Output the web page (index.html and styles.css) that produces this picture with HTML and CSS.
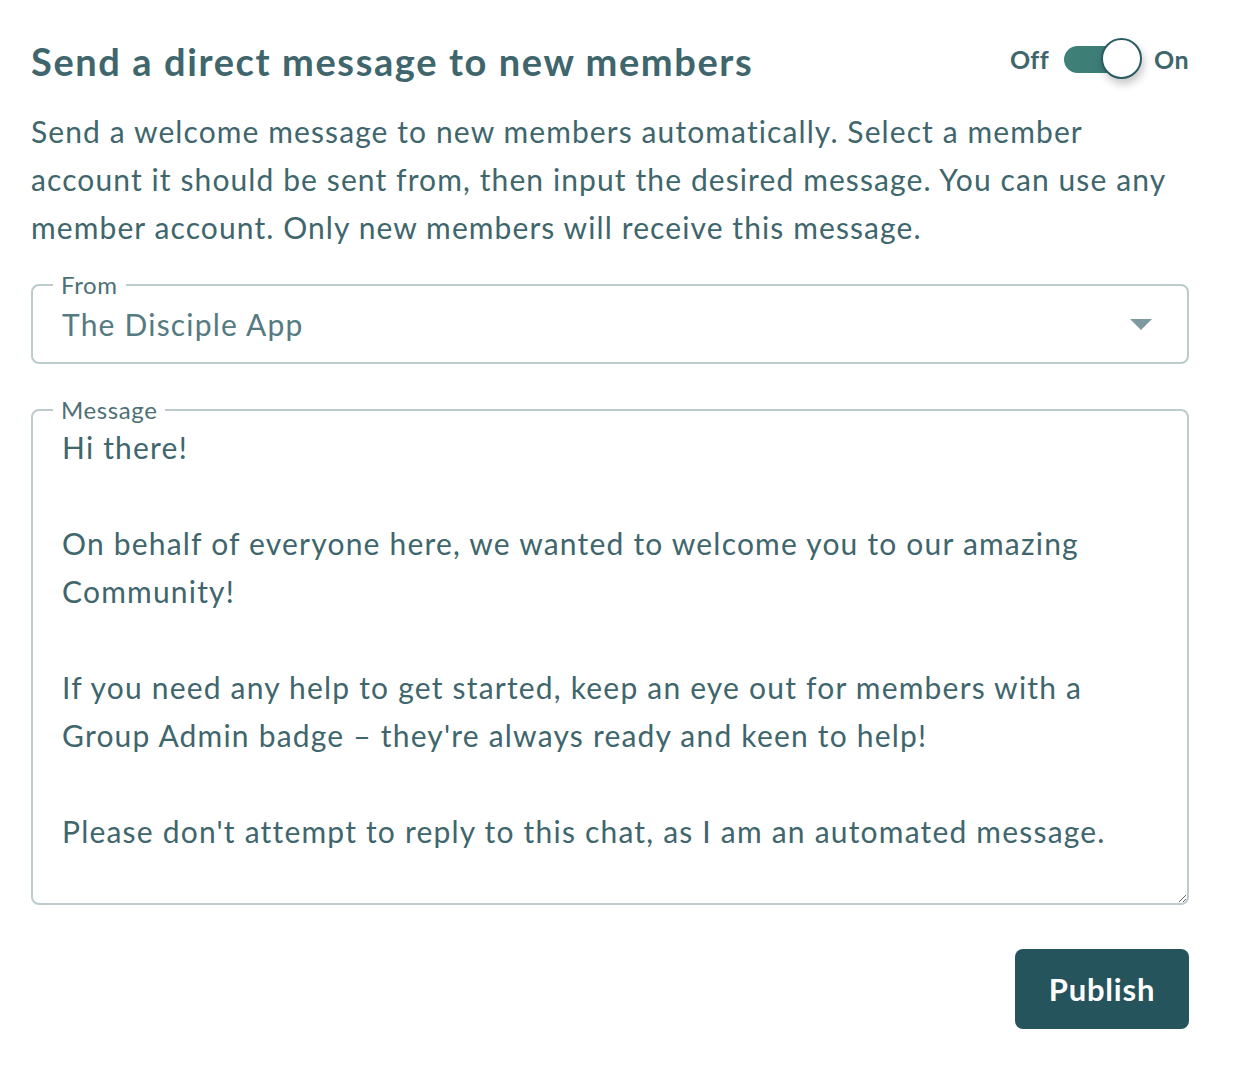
FILE: index.html
```html
<!DOCTYPE html>
<html lang="en">
<head>
<meta charset="utf-8">
<title>Send a direct message to new members</title>
<link rel="stylesheet" href="styles.css">
</head>
<body>
<main class="panel">
  <header class="panel-header">
    <h1 class="title">Send a direct message to new members</h1>
    <div class="toggle">
      <span class="toggle-label">Off</span>
      <span class="switch"><span class="switch-track"></span><span class="switch-knob"></span></span>
      <span class="toggle-label">On</span>
    </div>
  </header>
  <p class="description">Send a welcome message to new members automatically. Select a member account it should be sent from, then input the desired message. You can use any member account. Only new members will receive this message.</p>
  <fieldset class="field field-select">
    <legend class="field-legend">From</legend>
    <div class="select-row">
      <span class="select-value">The Disciple App</span>
      <span class="select-arrow"></span>
    </div>
  </fieldset>
  <fieldset class="field field-message">
    <legend class="field-legend">Message</legend>
    <textarea class="message" rows="9">Hi there!

On behalf of everyone here, we wanted to welcome you to our amazing Community!

If you need any help to get started, keep an eye out for members with a Group Admin badge – they're always ready and keen to help!

Please don't attempt to reply to this chat, as I am an automated message.</textarea>
  </fieldset>
  <div class="actions">
    <button class="publish" type="button">Publish</button>
  </div>
</main>
</body>
</html>
```
FILE: styles.css
```css
html, body {
  margin: 0;
  padding: 0;
  background: #ffffff;
}
body {
  font-family: "Lato", "Noto Sans", sans-serif;
  color: #3e666c;
}
.panel {
  width: 1158px;
  padding: 38px 0 0 31px;
}
.panel-header {
  display: flex;
  align-items: center;
  justify-content: space-between;
  height: 46px;
}
.title {
  margin: 0;
  font-size: 38px;
  font-weight: 700;
  color: #3e666c;
  letter-spacing: 1.6px;
}
.toggle {
  display: flex;
  align-items: center;
  margin-top: -4px;
}
.toggle-label {
  font-size: 25px;
  font-weight: 700;
  color: #3e666c;
  letter-spacing: 0.4px;
}
.switch {
  position: relative;
  width: 78px;
  height: 42px;
  margin: 0 12px 0 15px;
  display: flex;
  align-items: center;
}
.switch-track {
  width: 64px;
  height: 27px;
  border-radius: 14px;
  background: linear-gradient(90deg, #3f8178, #3a7a76);
}
.switch-knob {
  position: absolute;
  right: 0;
  top: 0;
  width: 37px;
  height: 37px;
  border-radius: 50%;
  background: #ffffff;
  border: 2.5px solid #2a5a62;
  box-shadow: 2px 5px 8px rgba(0, 0, 0, 0.22);
}
.description {
  margin: 23px 0 0;
  font-size: 30px;
  line-height: 48px;
  letter-spacing: 1.1px;
  color: #3e666c;
}
.field {
  margin: 0;
  border: 2px solid #bccbcc;
  border-radius: 8px;
  padding: 0 29px;
  min-width: 0;
}
.field-legend {
  padding: 0 8px;
  margin-left: -9px;
  font-size: 24px;
  line-height: 26px;
  letter-spacing: 0.6px;
  color: #4d7076;
}
.field-select {
  margin-top: 21px;
  height: 88px;
}
.select-row {
  display: flex;
  align-items: center;
  justify-content: space-between;
  height: 52px;
}
.select-value {
  font-size: 30px;
  letter-spacing: 1.2px;
  color: #557a80;
}
.select-arrow {
  width: 0;
  height: 0;
  border-left: 11px solid transparent;
  border-right: 11px solid transparent;
  border-top: 11px solid #7f9a9e;
  margin-right: 6px;
}
.field-message {
  margin-top: 33px;
  padding-right: 0;
  padding-bottom: 0;
}
.message {
  display: block;
  width: 100%;
  box-sizing: border-box;
  height: 480px;
  margin: 0;
  padding: 0 70px 0 0;
  border: none;
  outline: none;
  resize: vertical;
  font-family: inherit;
  font-size: 30px;
  line-height: 48px;
  letter-spacing: 1.2px;
  color: #3e666c;
  background: transparent;
  overflow: hidden;
}
.actions {
  display: flex;
  justify-content: flex-end;
  margin-top: 44px;
}
.publish {
  width: 174px;
  height: 80px;
  border: none;
  border-radius: 8px;
  background: #26545c;
  color: #ffffff;
  font-family: inherit;
  font-size: 31px;
  font-weight: 700;
  letter-spacing: 0.8px;
  cursor: pointer;
}
```
